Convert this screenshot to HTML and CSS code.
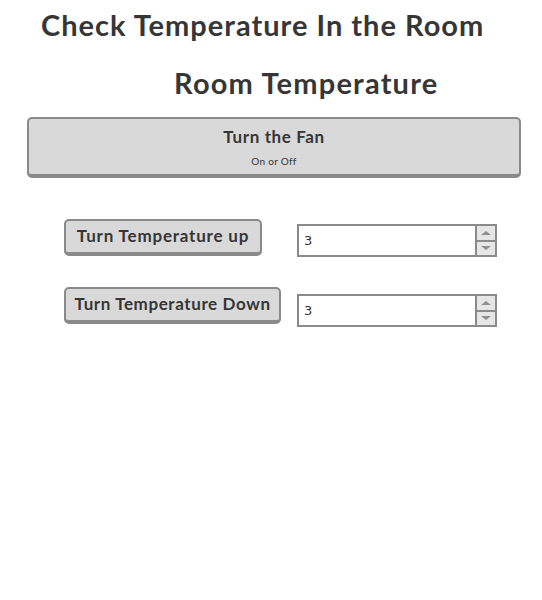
FILE: index.html
```html
<!DOCTYPE html>
<html>
<head>
<meta charset="utf-8">
<link rel="stylesheet" href="styles.css">
</head>
<body>
<div class="page">
  <h1 class="title">Check Temperature In the Room</h1>
  <h2 class="subtitle">Room Temperature</h2>
  <button class="btn fan">
    <span class="fan-main">Turn the Fan</span>
    <span class="fan-sub">On or Off</span>
  </button>
  <div class="controls">
    <div class="row row-up">
      <button class="btn ctl ctl-up">Turn Temperature up</button>
      <div class="num">
        <input class="num-input" type="text" value="3">
        <span class="spin"><span class="spin-up"></span><span class="spin-down"></span></span>
      </div>
    </div>
    <div class="row row-down">
      <button class="btn ctl ctl-down">Turn Temperature Down</button>
      <div class="num">
        <input class="num-input" type="text" value="3">
        <span class="spin"><span class="spin-up"></span><span class="spin-down"></span></span>
      </div>
    </div>
  </div>
</div>
</body>
</html>
```
FILE: styles.css
```css
html, body {
  margin: 0;
  padding: 0;
  background: #fff;
}
body {
  font-family: Lato, "Open Sans", sans-serif;
  color: #363636;
}
.page {
  padding-top: 8px;
}
.title {
  margin: 0;
  padding-left: 41px;
  font-size: 29px;
  letter-spacing: 1px;
  line-height: 34px;
  font-weight: 700;
}
.subtitle {
  margin: 24px 0 0 174px;
  font-size: 29px;
  letter-spacing: 1.2px;
  line-height: 34px;
  font-weight: 700;
}
.btn {
  font-family: Lato, "Open Sans", sans-serif;
  color: #363636;
  background: #d9d9d9;
  border: 2px solid #8a8a8a;
  border-bottom-width: 4px;
  border-radius: 5px;
  padding: 0;
  cursor: pointer;
  box-sizing: border-box;
}
.fan {
  display: flex;
  flex-direction: column;
  align-items: center;
  width: 494px;
  height: 61px;
  margin: 17px 0 0 27px;
  padding-top: 8px;
}
.fan-main {
  font-size: 17px;
  letter-spacing: 0.6px;
  font-weight: 700;
  line-height: 20px;
}
.fan-sub {
  font-size: 10px;
  letter-spacing: 0.3px;
  line-height: 12px;
  margin-top: 8px;
}
.controls {
  display: flex;
  flex-direction: column;
  gap: 30px;
  margin-top: 41px;
  padding-left: 64px;
}
.row {
  display: grid;
  grid-template-columns: 233px 200px;
  align-items: start;
}
.ctl {
  justify-self: start;
  height: 37px;
  padding: 0 0 2px;
  font-size: 17px;
  letter-spacing: 0.8px;
  font-weight: 700;
}
.ctl-up {
  width: 198px;
}
.ctl-down {
  width: 217px;
  letter-spacing: 0.6px;
}
.num {
  display: flex;
  margin-top: 5px;
  height: 33px;
  box-sizing: border-box;
  border: 2px solid #8a8a8a;
  background: #fff;
}
.row-down .num {
  margin-top: 7px;
}
.num-input {
  flex: 1;
  min-width: 0;
  border: 0;
  outline: 0;
  padding: 0 0 0 5px;
  font-family: "DejaVu Sans", sans-serif;
  font-size: 13px;
  color: #333;
  background: transparent;
}
.spin {
  display: flex;
  flex-direction: column;
  width: 18px;
  border-left: 2px solid #8a8a8a;
  background: #e6e6e6;
}
.spin-up, .spin-down {
  flex: 1;
  display: flex;
  align-items: center;
  justify-content: center;
}
.spin-up {
  border-bottom: 2px solid #8a8a8a;
}
.spin-up::before {
  content: "";
  border-left: 5px solid transparent;
  border-right: 5px solid transparent;
  border-bottom: 4px solid #8f8f8f;
}
.spin-down::before {
  content: "";
  border-left: 5px solid transparent;
  border-right: 5px solid transparent;
  border-top: 4px solid #8f8f8f;
}
```
